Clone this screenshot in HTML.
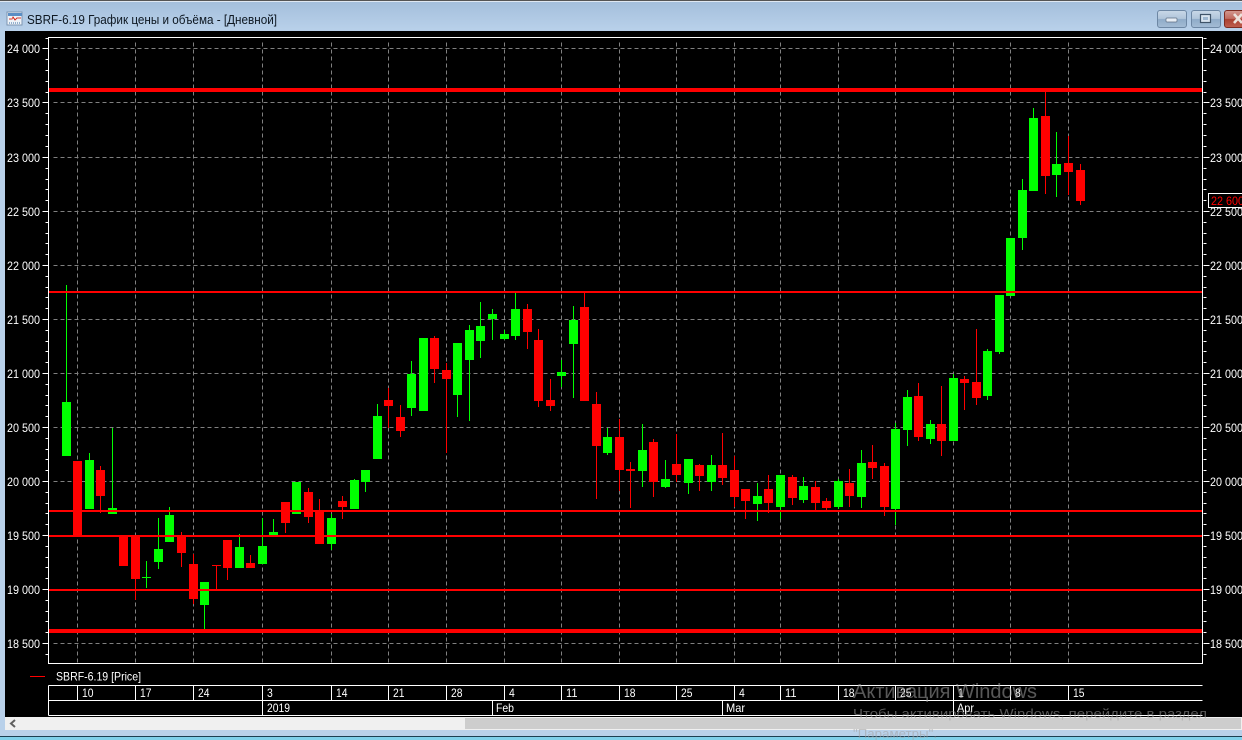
<!DOCTYPE html>
<html lang="ru"><head><meta charset="utf-8"><title>SBRF-6.19</title>
<style>
html,body{margin:0;padding:0;background:#000;width:1242px;height:740px;overflow:hidden}
svg{display:block;position:absolute;left:0;top:0}
text{font-family:"Liberation Sans",sans-serif}
</style></head><body>
<svg width="1242" height="740" viewBox="0 0 1242 740" xmlns="http://www.w3.org/2000/svg">
<defs>
<linearGradient id="t" x1="0" y1="0" x2="0" y2="1"><stop offset="0" stop-color="#a3bedb"/><stop offset="1" stop-color="#b9d1ea"/></linearGradient>
<linearGradient id="b" x1="0" y1="0" x2="0" y2="1"><stop offset="0" stop-color="#c9d8e8"/><stop offset=".48" stop-color="#b0c5da"/><stop offset=".52" stop-color="#8fabc8"/><stop offset="1" stop-color="#a4bcd5"/></linearGradient>
<linearGradient id="r" x1="0" y1="0" x2="0" y2="1"><stop offset="0" stop-color="#d49a90"/><stop offset=".48" stop-color="#c06a5e"/><stop offset=".52" stop-color="#a93f30"/><stop offset="1" stop-color="#bf5f4f"/></linearGradient>
</defs>
<rect width="1242" height="740" fill="#b9d1ea"/>
<rect width="1242" height="31" fill="url(#t)"/>
<rect width="1242" height="1" fill="#555"/>
<rect y="1" width="1242" height="1" fill="#dfe8f2"/>
<rect x="5" y="31" width="1237" height="686" fill="#000"/>
<!-- title -->
<g shape-rendering="crispEdges">
<rect x="7" y="12" width="15" height="13" fill="#eef3f8" stroke="#7d96b2"/>
<rect x="8" y="13" width="14" height="3" fill="#5b8ec4"/>
<path d="M9 19h3l1-2 2 3 2-2h4" fill="none" stroke="#d8392b"/>
<path d="M9 23h1M11 23h1M13 23h1M15 23h1M17 23h1M19 23h1" stroke="#3b6ea5" fill="none"/>
</g>
<text x="27" y="24" font-size="12.500" fill="#0e1822" textLength="250" lengthAdjust="spacingAndGlyphs">SBRF-6.19 График цены и объёма - [Дневной]</text>
<!-- window buttons -->
<rect x="1157.500" y="10.500" width="29" height="17" rx="2.500" fill="url(#b)" stroke="#6d87a4"/>
<rect x="1166" y="18" width="11" height="4" rx="1" fill="#e8eef5" stroke="#5d6f84" stroke-width=".7"/>
<rect x="1191.500" y="10.500" width="29" height="17" rx="2.500" fill="url(#b)" stroke="#6d87a4"/>
<rect x="1200.500" y="14.500" width="10" height="8" fill="#d9e4ef" stroke="#3f5469" stroke-width="1.200"/>
<rect x="1203" y="17" width="5" height="3" fill="#9db6cf"/>
<rect x="1224.500" y="10.500" width="30" height="17" rx="2.500" fill="url(#r)" stroke="#7d2c22"/>
<path d="M1234 14l8 9M1242 14l-8 9" stroke="#ece2dc" stroke-width="2.600" fill="none"/>

<g shape-rendering="crispEdges">
<!-- grid -->
<g transform="translate(.5 .5)" fill="none" stroke="#808080" stroke-dasharray="4 3">
<path d="M53 48H1198M53 102H1198M53 157H1198M53 211H1198M53 265H1198M53 319H1198M53 373H1198M53 427H1198M53 481H1198M53 535H1198M53 589H1198M53 643H1198"/>
<path d="M77 42V662M135 42V662M193 42V662M262 42V662M331 42V662M388 42V662M446 42V662M504 42V662M561 42V662M619 42V662M676 42V662M734 42V662M780 42V662M838 42V662M895 42V662M953 42V662M1010 42V662M1068 42V662"/>
</g>
<!-- green candles -->
<path fill="#00ff00" d="M66 285h1V456h-1zM62 402h9V456h-9zM89 453h1V509h-1zM85 460h9V509h-9zM112 428h1V514h-1zM108 508h9V514h-9zM146 561h1V588h-1zM142 577h9V578h-9zM158 518h1V569h-1zM154 549h9V562h-9zM169 507h1V542h-1zM165 515h9V542h-9zM204 582h1V629h-1zM200 582h9V605h-9zM239 534h1V568h-1zM235 547h9V568h-9zM262 518h1V564h-1zM258 546h9V564h-9zM273 519h1V535h-1zM269 532h9V535h-9zM292 482h9V514h-9zM331 514h1V550h-1zM327 518h9V544h-9zM354 479h1V509h-1zM350 480h9V509h-9zM365 470h1V492h-1zM361 470h9V482h-9zM377 404h1V459h-1zM373 416h9V459h-9zM411 361h1V416h-1zM407 374h9V408h-9zM419 338h9V411h-9zM457 343h1V417h-1zM453 343h9V395h-9zM469 325h1V421h-1zM465 330h9V360h-9zM480 302h1V358h-1zM476 326h9V341h-9zM492 309h1V340h-1zM488 314h9V319h-9zM504 330h1V340h-1zM500 334h9V339h-9zM515 293h1V340h-1zM511 309h9V336h-9zM561 360h1V387h-1zM557 372h9V376h-9zM573 306h1V398h-1zM569 320h9V344h-9zM607 428h1V455h-1zM603 437h9V453h-9zM642 424h1V487h-1zM638 450h9V471h-9zM665 460h1V488h-1zM661 479h9V487h-9zM688 459h1V494h-1zM684 459h9V483h-9zM711 455h1V491h-1zM707 465h9V482h-9zM757 483h1V521h-1zM753 496h9V504h-9zM780 475h1V519h-1zM776 475h9V507h-9zM803 477h1V503h-1zM799 486h9V500h-9zM838 479h1V509h-1zM834 481h9V507h-9zM861 450h1V508h-1zM857 463h9V497h-9zM895 423h1V525h-1zM891 429h9V509h-9zM907 390h1V446h-1zM903 397h9V430h-9zM930 420h1V444h-1zM926 424h9V439h-9zM953 374h1V441h-1zM949 378h9V441h-9zM987 349h1V400h-1zM983 351h9V396h-9zM999 295h1V354h-1zM995 295h9V352h-9zM1006 238h9V296h-9zM1022 179h1V250h-1zM1018 190h9V238h-9zM1033 108h1V191h-1zM1029 118h9V191h-9zM1056 132h1V197h-1zM1052 164h9V175h-9z"/>
<!-- red candles -->
<path fill="#ff0000" d="M73 461h9V536h-9zM100 466h1V513h-1zM96 470h9V496h-9zM119 536h9V566h-9zM135 536h1V600h-1zM131 536h9V579h-9zM181 532h1V567h-1zM177 536h9V553h-9zM193 554h1V604h-1zM189 564h9V599h-9zM216 565h1V589h-1zM212 565h9V566h-9zM227 540h1V580h-1zM223 540h9V568h-9zM250 555h1V568h-1zM246 563h9V568h-9zM285 502h1V533h-1zM281 502h9V523h-9zM308 488h1V523h-1zM304 492h9V517h-9zM319 499h1V544h-1zM315 510h9V544h-9zM342 496h1V519h-1zM338 501h9V507h-9zM388 388h1V428h-1zM384 400h9V406h-9zM400 405h1V437h-1zM396 417h9V431h-9zM434 336h1V383h-1zM430 338h9V369h-9zM446 363h1V453h-1zM442 370h9V379h-9zM527 304h1V349h-1zM523 309h9V332h-9zM538 329h1V407h-1zM534 340h9V401h-9zM550 379h1V411h-1zM546 400h9V406h-9zM584 293h1V401h-1zM580 307h9V401h-9zM596 392h1V499h-1zM592 404h9V446h-9zM619 419h1V491h-1zM615 437h9V470h-9zM630 462h1V508h-1zM626 469h9V471h-9zM653 439h1V497h-1zM649 442h9V482h-9zM676 434h1V482h-1zM672 464h9V475h-9zM699 464h1V491h-1zM695 465h9V476h-9zM722 433h1V485h-1zM718 465h9V478h-9zM734 456h1V507h-1zM730 470h9V497h-9zM745 489h1V519h-1zM741 489h9V501h-9zM768 475h1V513h-1zM764 489h9V503h-9zM792 475h1V505h-1zM788 477h9V498h-9zM815 481h1V510h-1zM811 487h9V503h-9zM826 498h1V510h-1zM822 501h9V508h-9zM849 469h1V507h-1zM845 483h9V496h-9zM872 445h1V479h-1zM868 462h9V468h-9zM884 463h1V516h-1zM880 466h9V507h-9zM918 383h1V441h-1zM914 396h9V437h-9zM941 386h1V456h-1zM937 424h9V441h-9zM964 376h1V410h-1zM960 379h9V383h-9zM976 329h1V405h-1zM972 382h9V398h-9zM1045 92h1V194h-1zM1041 116h9V176h-9zM1068 136h1V195h-1zM1064 163h9V172h-9zM1080 164h1V205h-1zM1076 170h9V201h-9z"/>
<!-- horizontal levels -->
<g fill="#ff0000">
<rect x="48" y="88" width="1155" height="4"/>
<rect x="48" y="291" width="1155" height="2"/>
<rect x="48" y="510" width="1155" height="2"/>
<rect x="48" y="535" width="1155" height="2"/>
<rect x="48" y="589" width="1155" height="2"/>
<rect x="48" y="629" width="1155" height="4"/>
</g>
<!-- frame and ticks -->
<g transform="translate(.5 .5)" fill="none" stroke="#fff">
<rect x="48" y="37" width="1154" height="626"/>
<path d="M42 48h6M42 102h6M42 157h6M42 211h6M42 265h6M42 319h6M42 373h6M42 427h6M42 481h6M42 535h6M42 589h6M42 643h6M1203 48h6M1203 102h6M1203 157h6M1203 211h6M1203 265h6M1203 319h6M1203 373h6M1203 427h6M1203 481h6M1203 535h6M1203 589h6M1203 643h6"/>
<path d="M45 59h3M45 70h3M45 81h3M45 92h3M45 113h3M45 124h3M45 135h3M45 146h3M45 168h3M45 179h3M45 189h3M45 200h3M45 222h3M45 233h3M45 243h3M45 254h3M45 276h3M45 287h3M45 297h3M45 308h3M45 330h3M45 341h3M45 351h3M45 362h3M45 384h3M45 395h3M45 405h3M45 416h3M45 438h3M45 449h3M45 459h3M45 470h3M45 492h3M45 503h3M45 513h3M45 524h3M45 546h3M45 557h3M45 567h3M45 578h3M45 600h3M45 611h3M45 621h3M45 632h3M45 654h3M45 38h3"/>
<path d="M1203 59h3M1203 70h3M1203 81h3M1203 92h3M1203 113h3M1203 124h3M1203 135h3M1203 146h3M1203 168h3M1203 179h3M1203 189h3M1203 200h3M1203 222h3M1203 233h3M1203 243h3M1203 254h3M1203 276h3M1203 287h3M1203 297h3M1203 308h3M1203 330h3M1203 341h3M1203 351h3M1203 362h3M1203 384h3M1203 395h3M1203 405h3M1203 416h3M1203 438h3M1203 449h3M1203 459h3M1203 470h3M1203 492h3M1203 503h3M1203 513h3M1203 524h3M1203 546h3M1203 557h3M1203 567h3M1203 578h3M1203 600h3M1203 611h3M1203 621h3M1203 632h3M1203 654h3M1203 38h3"/>
<!-- date table -->
<path d="M48 685H1202M48 700H1202M48 715H1202M48 685V715"/>
<path d="M77 685v15M135 685v15M193 685v15M262 685v15M331 685v15M388 685v15M446 685v15M504 685v15M561 685v15M619 685v15M676 685v15M734 685v15M780 685v15M838 685v15M895 685v15M953 685v15M1010 685v15M1068 685v15"/>
<path d="M262 700v15M492 700v15M722 700v15M953 700v15"/>
</g>
<rect x="30" y="676" width="15" height="1" fill="#ff0000"/>
</g>
<!-- axis labels -->
<g font-size="12" fill="#fff" text-anchor="start" lengthAdjust="spacingAndGlyphs">
<g>
<text x="7" y="53" textLength="33" lengthAdjust="spacingAndGlyphs">24 000</text><text x="7" y="107" textLength="33" lengthAdjust="spacingAndGlyphs">23 500</text><text x="7" y="162" textLength="33" lengthAdjust="spacingAndGlyphs">23 000</text><text x="7" y="216" textLength="33" lengthAdjust="spacingAndGlyphs">22 500</text><text x="7" y="270" textLength="33" lengthAdjust="spacingAndGlyphs">22 000</text><text x="7" y="324" textLength="33" lengthAdjust="spacingAndGlyphs">21 500</text><text x="7" y="378" textLength="33" lengthAdjust="spacingAndGlyphs">21 000</text><text x="7" y="432" textLength="33" lengthAdjust="spacingAndGlyphs">20 500</text><text x="7" y="486" textLength="33" lengthAdjust="spacingAndGlyphs">20 000</text><text x="7" y="540" textLength="33" lengthAdjust="spacingAndGlyphs">19 500</text><text x="7" y="594" textLength="33" lengthAdjust="spacingAndGlyphs">19 000</text><text x="7" y="648" textLength="33" lengthAdjust="spacingAndGlyphs">18 500</text>
</g>
<g>
<text x="1210" y="53" textLength="33" lengthAdjust="spacingAndGlyphs">24 000</text><text x="1210" y="107" textLength="33" lengthAdjust="spacingAndGlyphs">23 500</text><text x="1210" y="162" textLength="33" lengthAdjust="spacingAndGlyphs">23 000</text><text x="1210" y="216" textLength="33" lengthAdjust="spacingAndGlyphs">22 500</text><text x="1210" y="270" textLength="33" lengthAdjust="spacingAndGlyphs">22 000</text><text x="1210" y="324" textLength="33" lengthAdjust="spacingAndGlyphs">21 500</text><text x="1210" y="378" textLength="33" lengthAdjust="spacingAndGlyphs">21 000</text><text x="1210" y="432" textLength="33" lengthAdjust="spacingAndGlyphs">20 500</text><text x="1210" y="486" textLength="33" lengthAdjust="spacingAndGlyphs">20 000</text><text x="1210" y="540" textLength="33" lengthAdjust="spacingAndGlyphs">19 500</text><text x="1210" y="594" textLength="33" lengthAdjust="spacingAndGlyphs">19 000</text><text x="1210" y="648" textLength="33" lengthAdjust="spacingAndGlyphs">18 500</text>
</g>
</g>
<rect x="1208.500" y="193.500" width="40" height="14" fill="#000" stroke="#fff" shape-rendering="crispEdges"/>
<text x="1211" y="205" font-size="12" fill="#ff0000" textLength="33" lengthAdjust="spacingAndGlyphs">22 600</text>
<text x="56" y="680.500" font-size="12" fill="#fff" textLength="85" lengthAdjust="spacingAndGlyphs">SBRF-6.19 [Price]</text>
<g font-size="12" fill="#fff">
<text x="82" y="697" textLength="11.500" lengthAdjust="spacingAndGlyphs">10</text><text x="140" y="697" textLength="11.500" lengthAdjust="spacingAndGlyphs">17</text><text x="198" y="697" textLength="11.500" lengthAdjust="spacingAndGlyphs">24</text><text x="267" y="697" textLength="5.800" lengthAdjust="spacingAndGlyphs">3</text><text x="336" y="697" textLength="11.500" lengthAdjust="spacingAndGlyphs">14</text><text x="393" y="697" textLength="11.500" lengthAdjust="spacingAndGlyphs">21</text><text x="451" y="697" textLength="11.500" lengthAdjust="spacingAndGlyphs">28</text><text x="509" y="697" textLength="5.800" lengthAdjust="spacingAndGlyphs">4</text><text x="566" y="697" textLength="11.500" lengthAdjust="spacingAndGlyphs">11</text><text x="624" y="697" textLength="11.500" lengthAdjust="spacingAndGlyphs">18</text><text x="681" y="697" textLength="11.500" lengthAdjust="spacingAndGlyphs">25</text><text x="739" y="697" textLength="5.800" lengthAdjust="spacingAndGlyphs">4</text><text x="785" y="697" textLength="11.500" lengthAdjust="spacingAndGlyphs">11</text><text x="843" y="697" textLength="11.500" lengthAdjust="spacingAndGlyphs">18</text><text x="900" y="697" textLength="11.500" lengthAdjust="spacingAndGlyphs">25</text><text x="958" y="697" textLength="5.800" lengthAdjust="spacingAndGlyphs">1</text><text x="1015" y="697" textLength="5.800" lengthAdjust="spacingAndGlyphs">8</text><text x="1073" y="697" textLength="11.500" lengthAdjust="spacingAndGlyphs">15</text>
<text x="267" y="712" textLength="23" lengthAdjust="spacingAndGlyphs">2019</text><text x="496" y="712" textLength="18" lengthAdjust="spacingAndGlyphs">Feb</text><text x="726" y="712" textLength="19" lengthAdjust="spacingAndGlyphs">Mar</text><text x="957" y="712" textLength="17" lengthAdjust="spacingAndGlyphs">Apr</text>
</g>
<!-- scrollbar -->
<g shape-rendering="crispEdges">
<rect x="5" y="717" width="1237" height="13" fill="#f0f0f0"/>
<rect x="465" y="718" width="776" height="11" fill="#cdcdcd"/>
<rect x="0" y="730" width="1242" height="6" fill="#b9d1ea"/>
<rect x="0" y="736" width="1242" height="1" fill="#1c3f52"/>
<rect x="0" y="737" width="1242" height="3" fill="#7fd0ea"/>
</g>
<path d="M15 720l-4 3.500 4 3.500" fill="none" stroke="#606060" stroke-width="2"/>
<!-- activation watermark -->
<g fill="#a0a0a0" fill-opacity=".55">
<text x="853" y="698" font-size="20" textLength="184" lengthAdjust="spacingAndGlyphs">Активация Windows</text>
<text x="853" y="718" font-size="13.300" textLength="354" lengthAdjust="spacingAndGlyphs">Чтобы активировать Windows, перейдите в раздел</text>
<text x="853" y="738" font-size="13.300">"Параметры".</text>
</g>
</svg>
</body></html>
